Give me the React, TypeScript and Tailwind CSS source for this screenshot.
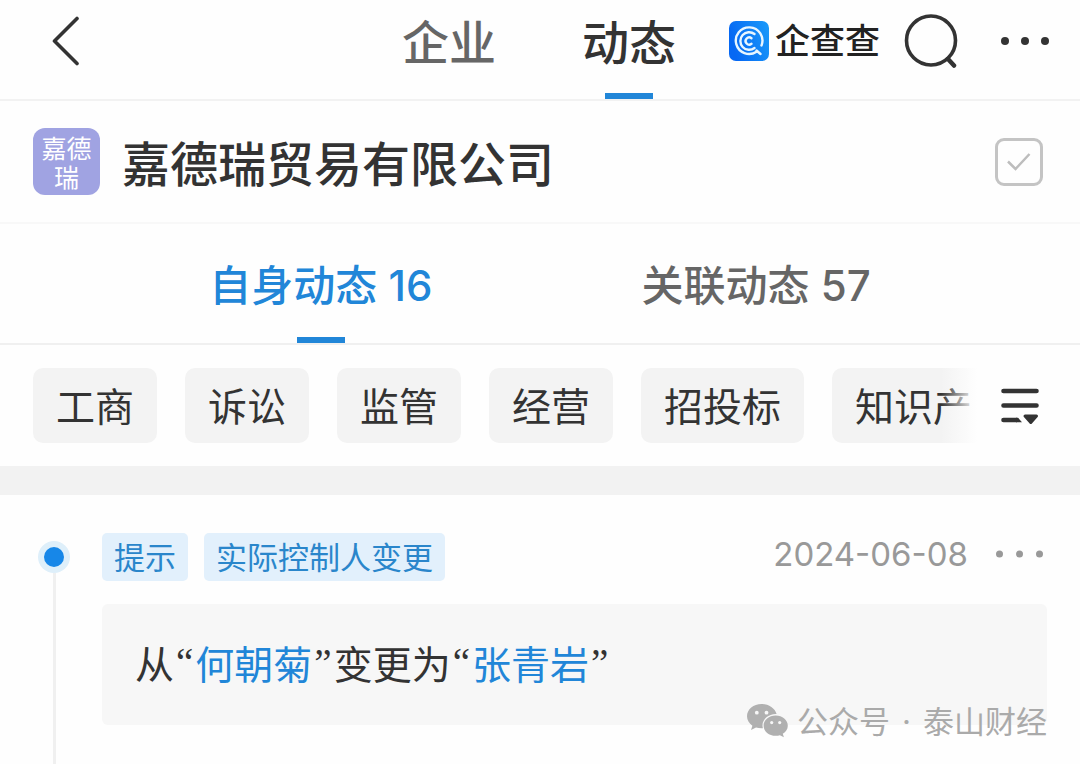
import React, { useState } from 'react';

const PAGE_TABS = ['企业', '动态'];

const FEED_TABS = [
  { label: '自身动态', count: 16 },
  { label: '关联动态', count: 57 },
];

const CATEGORIES = ['工商', '诉讼', '监管', '经营', '招投标', '知识产'];

const CJK = "font-['Noto_Sans_CJK_SC',sans-serif]";
const LATIN = "font-['Inter','Noto_Sans_CJK_SC',sans-serif]";
const QUOTE = "px-0.5 font-['Liberation_Serif',serif]";

const BackIcon = () => (
  <svg width="28" height="50" viewBox="0 0 28 50" fill="none" stroke="#333" strokeWidth="3.6" strokeLinecap="round" strokeLinejoin="round">
    <path d="M25 2.5 2.500 25 25 47.500" />
  </svg>
);

const SearchIcon = () => (
  <svg width="54" height="54" viewBox="0 0 54 54" fill="none" stroke="#333" strokeWidth="3.600" strokeLinecap="round">
    <circle cx="27" cy="26.500" r="24.500" />
    <path d="m44 45 6 6.500" strokeWidth="4.500" />
  </svg>
);

const DotsIcon = ({ size, r }: { size: number; r: number }) => (
  <svg width={size} height="10" viewBox={`0 0 ${size} 10`} fill="currentColor">
    <circle cx={r} cy="5" r={r} />
    <circle cx={size / 2} cy="5" r={r} />
    <circle cx={size - r} cy="5" r={r} />
  </svg>
);

const BrandIcon = () => (
  <svg width="40" height="40" viewBox="0 0 40 40" fill="none">
    <defs>
      <linearGradient id="brand" x1="0" y1="0.300" x2="1" y2="0">
        <stop offset="0" stopColor="#0668f3" />
        <stop offset="1" stopColor="#1a9bfa" />
      </linearGradient>
    </defs>
    <rect width="40" height="40" rx="7" fill="url(#brand)" />
    <g stroke="#e8f6ff" strokeLinecap="round">
      <path d="M27.500 30.700A13.300 13.300 0 1 1 32.500 24.500M27.500 29.500l4 3.500" strokeWidth="2.400" />
      <path d="M25.500 13A8.800 8.800 0 1 0 25.500 27" strokeWidth="2.400" />
      <path d="M22.500 17.200A3.600 3.600 0 1 0 22.500 22.800" strokeWidth="2.400" />
    </g>
  </svg>
);

const FilterIcon = () => (
  <svg width="38" height="38" viewBox="0 0 38 38" fill="none" stroke="#333" strokeWidth="4.600" strokeLinecap="round">
    <path d="M2.500 4h33M2.500 18.500h33M2.500 33h13" />
    <path d="M15 30.700h2l4 4.600h-6z" fill="#333" stroke="none" />
    <path d="M24 29h11.500l-5.700 6.500z" fill="#333" strokeWidth="3" strokeLinejoin="round" />
  </svg>
);

const WechatIcon = () => (
  <svg width="42" height="34" viewBox="0 0 42 34">
    <path fill="#b0b0b0" d="M14.500 0C6.500 0 0 5.400 0 12.300c0 3.900 2.100 7.200 5.400 9.500L4 26l5-2.500c1.800.5 3.600.8 5.500.8h1.400a11 11 0 0 1-.4-3c0-6.300 6-11.300 13.200-11.300h.9C28 4.200 21.800 0 14.500 0z" />
    <path fill="#b0b0b0" d="M28.700 11.500c-6.700 0-12.100 4.500-12.100 10.200s5.400 10.100 12.100 10.100c1.500 0 2.900-.2 4.200-.6l4 2.100-1.100-3.500c3.100-1.900 5-4.800 5-8.100 0-5.700-5.400-10.200-12.100-10.200z" />
    <g fill="#f7f7f7">
      <circle cx="9.800" cy="8.700" r="1.900" />
      <circle cx="19.500" cy="8.700" r="1.900" />
      <circle cx="24.700" cy="18.600" r="1.600" />
      <circle cx="32.700" cy="18.600" r="1.600" />
    </g>
  </svg>
);

const App = () => {
  const [pageTab, setPageTab] = useState('动态');
  const [feedTab, setFeedTab] = useState('自身动态');
  const [followed, setFollowed] = useState(false);

  return (
    <div className={`relative flex min-h-screen flex-col overflow-hidden bg-[#fefefe] text-[#333] ${CJK}`}>
      <header className="grid h-[101px] grid-cols-[1fr_auto_1fr] border-b-2 border-[#f2f2f2]">
        <div className="flex items-center pb-[18px] pl-[52px]">
          <button type="button" aria-label="返回">
            <BackIcon />
          </button>
        </div>
        <nav className="flex gap-[86px] pr-0.5">
          {PAGE_TABS.map((tab) => (
            <button
              key={tab}
              type="button"
              onClick={() => setPageTab(tab)}
              className={`relative pb-5 text-[47px] leading-none font-medium ${pageTab === tab ? 'text-[#333]' : 'text-[#666]'}`}
            >
              {tab}
              {pageTab === tab && <span className="absolute bottom-0 left-1/2 h-1.5 w-12 -translate-x-1/2 bg-[#2186d8]" />}
            </button>
          ))}
        </nav>
        <div className="flex items-center justify-end pr-[31px] pb-[18px]">
          <a href="#" className="flex items-center gap-1.5 text-[35px] leading-none font-medium text-[#222]">
            <BrandIcon />
            <span className="pb-1">企查查</span>
          </a>
          <button type="button" aria-label="搜索" className="ml-6">
            <SearchIcon />
          </button>
          <button type="button" aria-label="更多" className="ml-[43px]">
            <DotsIcon size={48} r={4} />
          </button>
        </div>
      </header>

      <section className="flex h-[123px] items-center border-b-2 border-[#f8f8f8] pr-[37px] pl-[33px]">
        <div className="flex size-[67px] shrink-0 items-center justify-center rounded-xl bg-[#a0a3e2] text-center text-[25px] leading-[29px] text-white">
          <span className="w-[50px]">嘉德瑞</span>
        </div>
        <h1 className="ml-[22px] pb-0.5 text-[48px] leading-none font-medium">嘉德瑞贸易有限公司</h1>
        <label className="relative ml-auto size-12">
          <input
            type="checkbox"
            aria-label="选择"
            checked={followed}
            onChange={(e) => setFollowed(e.target.checked)}
            className="block size-full appearance-none rounded-[9px] border-3 border-[#c4c4c4] checked:border-[#2186d8]"
          />
          <svg className="pointer-events-none absolute inset-0" width="48" height="48" viewBox="0 0 48 48" fill="none" stroke="#bdbdbd" strokeWidth="2.500">
            <path d="m13 23.500 7.500 7.500 14-15" />
          </svg>
        </label>
      </section>

      <nav className="flex h-[121px] justify-evenly border-b-2 border-[#f0f0f0]">
        {FEED_TABS.map(({ label, count }) => (
          <button
            key={label}
            type="button"
            onClick={() => setFeedTab(label)}
            className={`relative flex items-center pt-1 text-[42px] leading-none font-medium ${feedTab === label ? 'text-[#2186d8]' : 'text-[#666]'}`}
          >
            <span className={LATIN}>{label} {count}</span>
            {feedTab === label && <span className="absolute bottom-0 left-1/2 h-1.5 w-12 -translate-x-1/2 bg-[#2186d8]" />}
          </button>
        ))}
      </nav>

      <section className="flex h-[121px] items-center pr-[41px] pl-[33px]">
        <div className="relative flex min-w-0 flex-1 gap-7 overflow-hidden">
          {CATEGORIES.map((item) => (
            <button
              key={item}
              type="button"
              className="h-[75px] shrink-0 rounded-[10px] bg-[#f3f3f3] px-[23px] pb-0.5 text-[39px] leading-none whitespace-nowrap"
            >
              {item}
            </button>
          ))}
          <div className="pointer-events-none absolute inset-y-0 right-0 w-9 bg-linear-to-r from-[#fefefe]/0 to-[#fefefe]" />
        </div>
        <button type="button" aria-label="筛选" className="ml-6">
          <FilterIcon />
        </button>
      </section>

      <div className="h-[29px] bg-[#f2f2f2]" />

      <main className="flex flex-1 pr-[33px] pl-[38px]">
        <div className="flex w-8 flex-col items-center pt-[46px]">
          <span className="flex size-8 shrink-0 items-center justify-center rounded-full bg-[#deeffa]">
            <span className="size-5 rounded-full bg-[#1787e8]" />
          </span>
          <span className="w-[3px] flex-1 bg-[#f0f0f0]" />
        </div>
        <article className="ml-8 flex-1 pt-[38px] pb-10">
          <div className="flex items-center">
            <span className="flex h-12 items-center rounded-[5px] bg-[#e2f0fc] px-3 pb-1 text-[31px] leading-none text-[#2a86cb]">提示</span>
            <span className="ml-4 flex h-12 items-center rounded-[5px] bg-[#e2f0fc] px-3 pb-1 text-[31px] leading-none text-[#2a86cb]">
              实际控制人变更
            </span>
            <div className="ml-auto flex items-center pb-1.5 text-[#999]">
              <time className={`text-[33px] leading-none ${LATIN}`}>2024-06-08</time>
              <button type="button" aria-label="更多操作" className="mr-1 ml-7">
                <DotsIcon size={47} r={3.5} />
              </button>
            </div>
          </div>
          <p className="mt-[23px] flex h-[121px] items-center rounded-md bg-[#f7f7f7] px-[33px] pb-1 text-[39px] leading-none">
            从<span className={QUOTE}>“</span>
            <a href="#" className="text-[#2186d8]">何朝菊</a>
            <span className={QUOTE}>”</span>变更为<span className={QUOTE}>“</span>
            <a href="#" className="text-[#2186d8]">张青岩</a>
            <span className={QUOTE}>”</span>
          </p>
        </article>
      </main>

      <div className="absolute right-[33px] bottom-[27px] flex items-center gap-2 text-[31px] leading-none text-[#aaa]">
        <WechatIcon />
        <div className={`flex gap-3 ${LATIN}`}>
          <span>公众号</span>
          <span>·</span>
          <span>泰山财经</span>
        </div>
      </div>
    </div>
  );
};

export default App;
